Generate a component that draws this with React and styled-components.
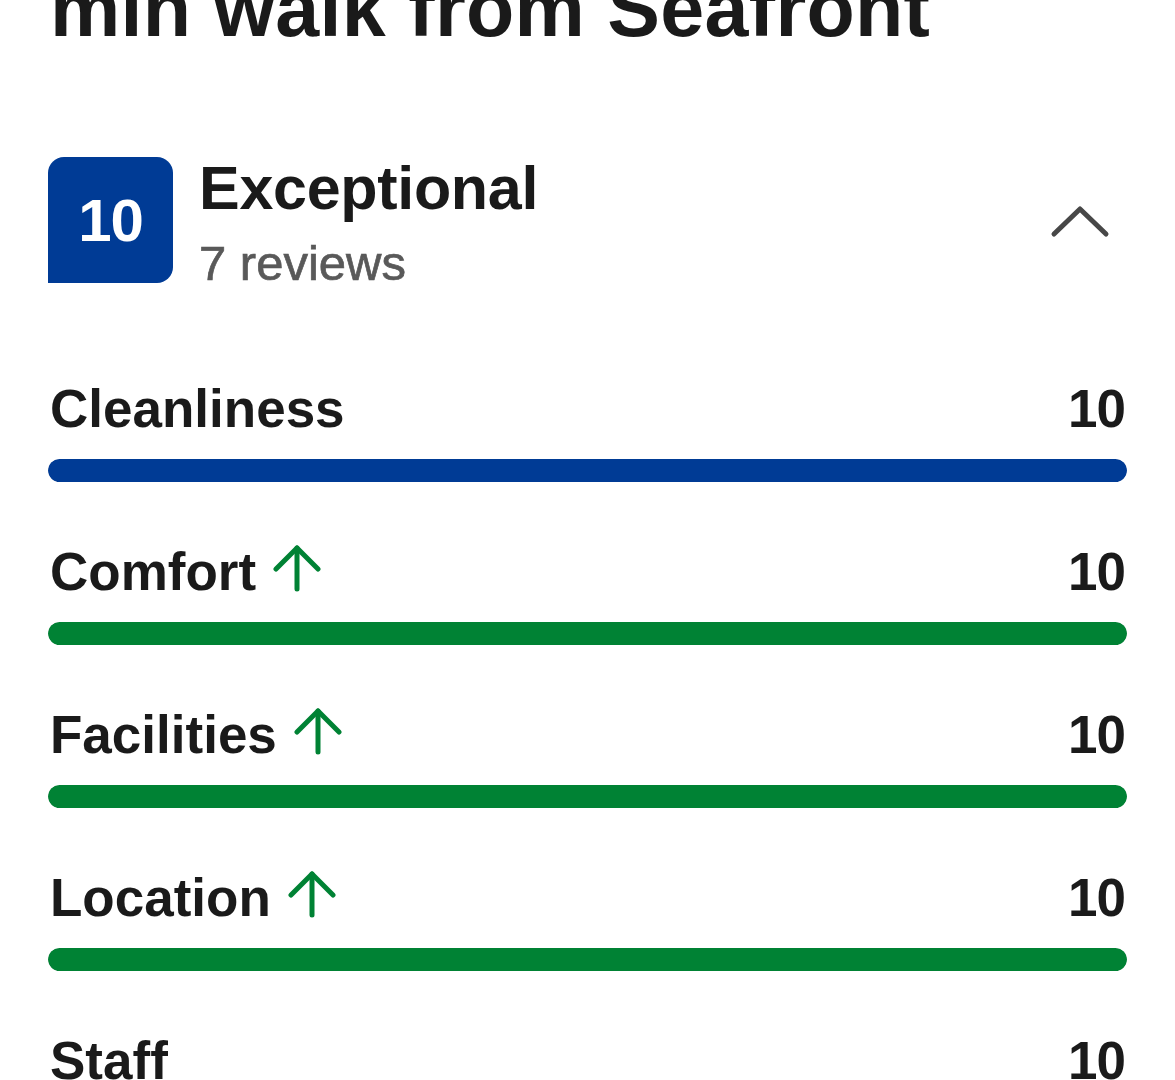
import React from "react";
import styled, { createGlobalStyle } from "styled-components";

const GlobalStyle = createGlobalStyle`
  html, body { margin: 0; padding: 0; background: #ffffff; }
  body { font-family: "Liberation Sans", Arial, sans-serif; color: #1a1a1a; overflow: hidden; }
`;

const Page = styled.div`
  width: 1175px;
  height: 1080px;
  overflow: hidden;
  box-sizing: border-box;
  padding: 0 48px;
`;

const Title = styled.h1`
  margin: -36px 0 0 2px;
  font-size: 79px;
  line-height: 90px;
  font-weight: 700;
  color: #1a1a1a;
  letter-spacing: 0.3px;
  white-space: nowrap;
`;

const Header = styled.div`
  display: flex;
  align-items: flex-start;
  margin-top: 103px;
`;

const Badge = styled.div`
  width: 125px;
  height: 126px;
  flex: none;
  background: #003b95;
  border-radius: 16px 16px 16px 0;
  color: #ffffff;
  display: flex;
  align-items: center;
  justify-content: center;
  font-size: 60px;
  font-weight: 700;
  letter-spacing: -1px;
`;

const HeaderText = styled.div`
  display: flex;
  flex-direction: column;
  margin-left: 26px;
  margin-top: -2px;
  flex: 1;
`;

const Verdict = styled.div`
  font-size: 61px;
  line-height: 66px;
  font-weight: 700;
  color: #1a1a1a;
  letter-spacing: -0.3px;
`;

const ReviewCount = styled.div`
  margin-top: 14px;
  font-size: 49px;
  line-height: 56px;
  font-weight: 400;
  color: #595959;
  -webkit-text-stroke: 0.7px #595959;
`;

const Toggle = styled.button`
  flex: none;
  border: none;
  background: none;
  padding: 0;
  margin: 46px 17px 0 0;
  width: 60px;
  height: 36px;
  display: flex;
  align-items: center;
  justify-content: center;
  cursor: pointer;
`;

const List = styled.div`
  display: flex;
  flex-direction: column;
  gap: 60px;
  margin-top: 88px;
`;

const Row = styled.div`
  display: flex;
  flex-direction: column;
`;

const LabelLine = styled.div`
  display: flex;
  align-items: center;
  justify-content: space-between;
  height: 60px;
`;

const Label = styled.div`
  display: flex;
  align-items: center;
  gap: 17px;
  font-size: 53px;
  line-height: 60px;
  font-weight: 700;
  color: #1a1a1a;
  padding-left: 2px;
`;

const Score = styled.div`
  font-size: 53px;
  line-height: 60px;
  font-weight: 700;
  color: #1a1a1a;
  padding-right: 2px;
  letter-spacing: -1px;
`;

const Track = styled.div`
  margin-top: 20px;
  height: 23px;
  border-radius: 12px;
  background: #e7e7e7;
  overflow: hidden;
`;

const Fill = styled.div`
  height: 100%;
  border-radius: 12px;
  background: ${(p) => (p.$tone === "green" ? "#008234" : "#003b95")};
`;

const ArrowIcon = styled.svg`
  flex: none;
  margin-top: -8px;
`;

const ArrowUp = () => (
  <ArrowIcon width="48" height="48" viewBox="0 0 48 48" fill="none">
    <path d="M24 45V4" stroke="#008234" strokeWidth="5" strokeLinecap="round" />
    <path d="M3 25 24 4l21 21" stroke="#008234" strokeWidth="5" strokeLinecap="round" strokeLinejoin="round" />
  </ArrowIcon>
);

const ChevronUp = () => (
  <svg width="60" height="36" viewBox="0 0 60 36" fill="none">
    <path d="M4 31 30 6l26 25" stroke="#474747" strokeWidth="5" strokeLinecap="round" strokeLinejoin="round" />
  </svg>
);

const categories = [
  { name: "Cleanliness", score: 10, tone: "blue", up: false },
  { name: "Comfort", score: 10, tone: "green", up: true },
  { name: "Facilities", score: 10, tone: "green", up: true },
  { name: "Location", score: 10, tone: "green", up: true },
  { name: "Staff", score: 10, tone: "green", up: false },
];

export default function App() {
  return (
    <>
      <GlobalStyle />
      <Page>
        <Title>min walk from Seafront</Title>
        <Header>
          <Badge>10</Badge>
          <HeaderText>
            <Verdict>Exceptional</Verdict>
            <ReviewCount>7 reviews</ReviewCount>
          </HeaderText>
          <Toggle aria-label="Collapse">
            <ChevronUp />
          </Toggle>
        </Header>
        <List>
          {categories.map((c) => (
            <Row key={c.name}>
              <LabelLine>
                <Label>
                  {c.name}
                  {c.up && <ArrowUp />}
                </Label>
                <Score>{c.score}</Score>
              </LabelLine>
              <Track>
                <Fill $tone={c.tone} style={{ width: `${(c.score / 10) * 100}%` }} />
              </Track>
            </Row>
          ))}
        </List>
      </Page>
    </>
  );
}
